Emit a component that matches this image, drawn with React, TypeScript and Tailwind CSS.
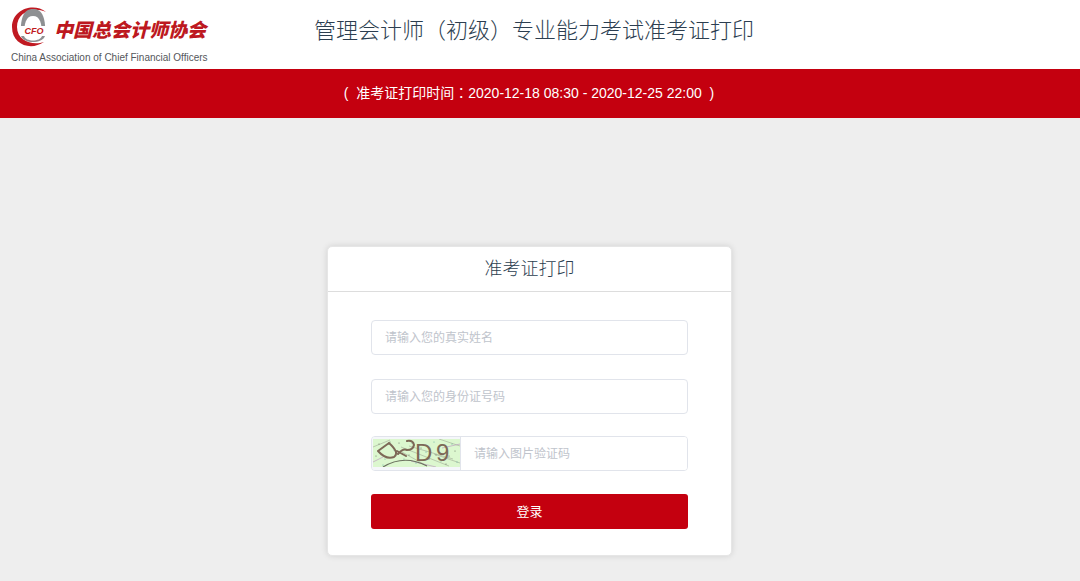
import React from "react";

const inputClass =
  "w-full min-w-0 bg-white px-[13px] text-xs text-[#606266] outline-none placeholder:text-[#c0c4cc]";

function Logo() {
  return (
    <svg
      viewBox="0 0 208 62"
      className="h-[62px] w-[208px] shrink-0"
      role="img"
      aria-label="中国总会计师协会"
    >
      <path
        d="M40 11 C28 1 6 8 6 26 C6 44 25 50 38 41 C27 45 11 40 11 26 C11 12 26 5 40 11 Z"
        fill="#c01a22"
      />
      <path
        d="M15 35 C14 18 17 8 27 8 C37 8 40 18 39 35 C36 43 18 43 15 35 Z"
        fill="#8e9092"
      />
      <path
        d="M18 35 C18 22 20 15 27 15 C34 15 36 22 36 35 C34 41 20 41 18 35 Z"
        fill="#ffffff"
      />
      <rect x="14" y="25" width="27" height="10" fill="#ffffff" />
      <text
        x="28"
        y="33"
        textAnchor="middle"
        fontSize="9"
        fontWeight="700"
        fontStyle="italic"
        fill="#c01a22"
        fontFamily="Liberation Sans, sans-serif"
      >
        CFO
      </text>
      <text
        x="48"
        y="36"
        fontSize="19"
        fontWeight="900"
        fontStyle="italic"
        fill="#bd1820"
        fontFamily="Noto Sans CJK SC, sans-serif"
      >
        中国总会计师协会
      </text>
      <text x="5" y="60" fontSize="10" fill="#54565a" fontFamily="Liberation Sans, sans-serif">
        China Association of Chief Financial Officers
      </text>
    </svg>
  );
}

const specks = [
  [6, 5], [12, 20], [17, 3], [21, 11], [26, 4], [31, 20], [36, 16], [43, 24],
  [48, 9], [53, 13], [56, 20], [61, 3], [63, 16], [68, 22], [73, 25], [79, 5],
  [82, 12], [84, 23], [3, 17], [39, 4], [76, 17], [10, 26],
];

function Captcha() {
  return (
    <svg viewBox="0 0 87 28" className="h-7 w-[87px]" role="img" aria-label="图片验证码">
      <rect width="87" height="28" fill="#dcf7cf" />
      <g fill="none" stroke="#a9b59d" strokeWidth="0.700">
        <path d="M0 8 L17 1 M28 8 L76 27 M36 7 L80 20 M61 15 L87 24 M29 13 L54 27 M66 0 L87 7" />
        <path d="M0 23 L10 18 M38 22 L63 28 M69 9 L87 5" stroke="#bd9fc2" />
      </g>
      <path d="M10 28 Q31 15 54 27" fill="none" stroke="#6c725f" strokeWidth="1.200" />
      {specks.map(([x, y], i) => (
        <circle key={i} cx={x} cy={y} r="0.500" fill={i % 2 ? "#55a49b" : "#566252"} />
      ))}
      <path
        d="M16 4 L5 12 Q13 21 21 18 Q27 14 16 4 M33 17 L24 12 M25 15 Q30 9 34 11 Q40 11 41 6 Q40 1 34 2"
        fill="none"
        stroke="#7d6957"
        strokeWidth="2"
        strokeLinecap="round"
        strokeLinejoin="round"
      />
      <g fill="#7d6957" fontFamily="Liberation Sans, sans-serif" fontSize="24">
        <text x="42" y="22">
          D
        </text>
        <text x="63" y="22">
          9
        </text>
      </g>
    </svg>
  );
}

export default function App() {
  return (
    <div className="flex min-h-screen flex-col bg-[#eeeeee] font-['Liberation_Sans','Noto_Sans_CJK_SC',sans-serif]">
      <header className="flex h-[69px] items-start bg-white pl-1.5 pt-[1px]">
        <Logo />
        <h1 className="ml-[100px] mt-3 text-[22px] leading-9 font-light whitespace-nowrap text-[#2c3e50]">
          管理会计师（初级）专业能力考试准考证打印
        </h1>
      </header>
      <div className="flex h-[49px] items-center justify-center bg-[#c4000f] pr-[22px] pb-0.5 text-sm whitespace-pre text-white">
        <p>
          {"(  准考证打印时间"}
          <span className="font-['Noto_Sans_CJK_TC',sans-serif]">：</span>
          {"2020-12-18 08:30 - 2020-12-25 22:00  )"}
        </p>
      </div>
      <main className="flex flex-1 justify-center pr-[21px] pt-32 pb-6">
        <form
          className="w-[405px] self-start rounded-[5px] border border-[#e6e6e6] bg-white shadow-[0_0_6px_rgba(0,0,0,0.12)]"
          onSubmit={(e) => e.preventDefault()}
        >
          <h2 className="border-b border-[#dddddd] text-center text-[18px] leading-[44px] font-light text-[#2c3e50]">
            准考证打印
          </h2>
          <div className="flex flex-col px-[43px] pt-7 pb-[26px]">
            <input
              type="text"
              aria-label="真实姓名"
              placeholder="请输入您的真实姓名"
              className={`${inputClass} h-[35px] rounded border border-[#e1e4eb]`}
            />
            <input
              type="text"
              aria-label="身份证号码"
              placeholder="请输入您的身份证号码"
              className={`${inputClass} mt-6 h-[35px] rounded border border-[#e1e4eb]`}
            />
            <div className="mt-[22px] flex h-[35px] overflow-hidden rounded border border-[#e1e4eb]">
              <div className="flex shrink-0 items-start border-r border-[#e1e4eb] bg-[#f5f7fa] pt-0.5 pl-px">
                <Captcha />
              </div>
              <input
                type="text"
                aria-label="图片验证码"
                placeholder="请输入图片验证码"
                className={inputClass}
              />
            </div>
            <button
              type="submit"
              className="mt-[23px] h-[35px] rounded-[3px] bg-[#c4000f] text-[13px] text-white"
            >
              登录
            </button>
          </div>
        </form>
      </main>
    </div>
  );
}
